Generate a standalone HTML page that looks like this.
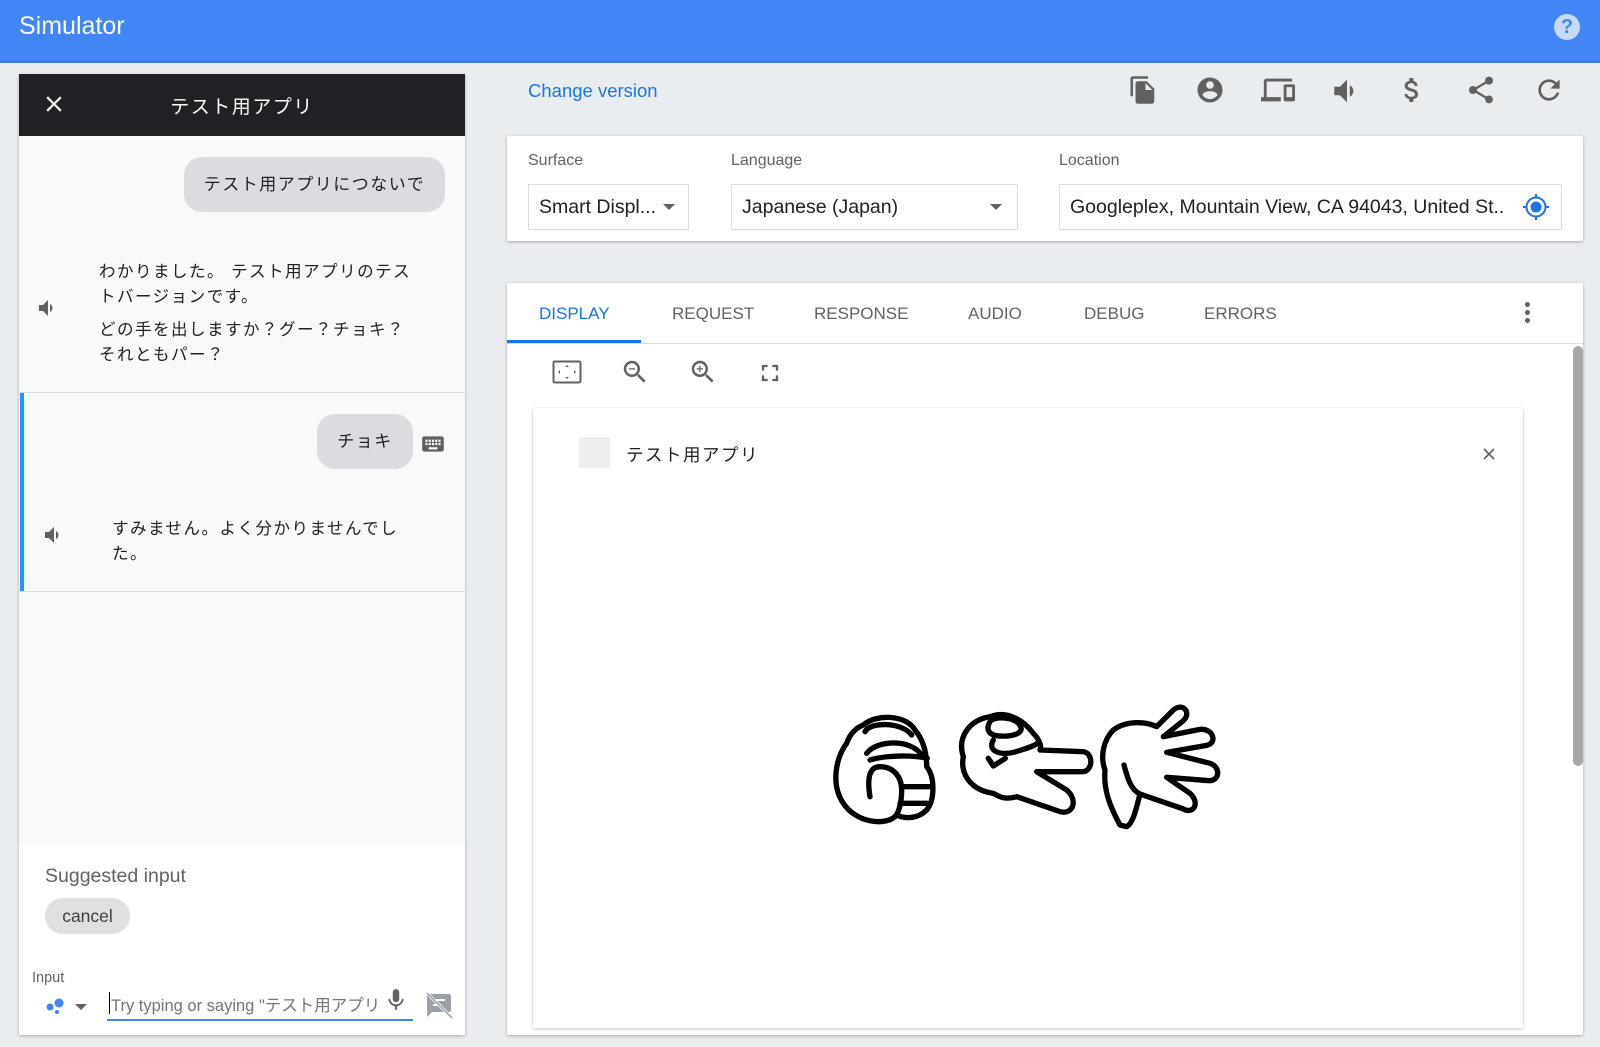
<!DOCTYPE html>
<html><head><meta charset="utf-8">
<style>
*{box-sizing:border-box;margin:0;padding:0}
body{width:1600px;height:1047px;background:#eaedf0;font-family:"Liberation Sans","Noto Sans CJK JP",sans-serif;position:relative;overflow:hidden;color:#202124}
.a{position:absolute}
.ic{position:absolute;fill:#616161}
.jp{font-family:"Liberation Sans","Noto Sans CJK JP",sans-serif;letter-spacing:1.5px}
.tab{position:absolute;top:304px;font-size:17px;color:#5f6368}
</style></head><body>
<div class="a" style="left:0;top:0;width:1600px;height:63px;background:#4285f4;border-bottom:2px solid #3b78e7"></div>
<div class="a" style="left:19px;top:12px;font-size:25px;color:#fff">Simulator</div>
<div class="a" style="left:1554px;top:14px;width:26px;height:26px;border-radius:50%;background:#c6dafc;color:#4285f4;font-weight:bold;font-size:20px;text-align:center;line-height:26px">?</div>

<!-- left panel -->
<div class="a" style="left:19px;top:74px;width:446px;height:961px;background:#fff;box-shadow:0 1px 3px rgba(0,0,0,.3)"></div>
<div class="a" style="left:19px;top:74px;width:446px;height:62px;background:#202124"></div>
<svg class="a" style="left:41px;top:91px" width="26" height="26" viewBox="0 0 24 24"><path fill="#fff" d="M19 6.41L17.59 5 12 10.59 6.41 5 5 6.41 10.59 12 5 17.59 6.41 19 12 13.41 17.59 19 19 17.59 13.41 12z"/></svg>
<div class="a jp" style="left:19px;width:446px;top:92px;text-align:center;color:#fff;font-size:19px">テスト用アプリ</div>
<div class="a" style="left:19px;top:136px;width:446px;height:709px;background:#f8f9fa"></div>
<div class="a jp" style="left:184px;top:157px;width:261px;height:55px;border-radius:18px;background:#dadce0;font-size:17px;line-height:55px;text-align:center">テスト用アプリにつないで</div>
<svg class="ic" style="left:36px;top:296px" width="24" height="24" viewBox="0 0 24 24"><path d="M3 9v6h4l5 5V4L7 9H3zm13.5 3c0-1.77-1.02-3.29-2.5-4.03v8.05c1.48-.73 2.5-2.25 2.5-4.02z"/></svg>
<div class="a jp" style="left:99px;top:260px;width:318px;font-size:16.5px;line-height:24.5px">わかりました。 テスト用アプリのテストバージョンです。<div style="height:9px"></div>どの手を出しますか？グー？チョキ？それともパー？</div>
<div class="a" style="left:19px;top:392px;width:446px;height:1px;background:#dadce0"></div>
<div class="a" style="left:20px;top:393px;width:4px;height:198px;background:#2196f3"></div>
<div class="a jp" style="left:317px;top:414px;width:96px;height:55px;border-radius:18px;background:#dadce0;font-size:17px;line-height:55px;text-align:center">チョキ</div>
<svg class="ic" style="left:420px;top:431px" width="26" height="26" viewBox="0 0 24 24"><path d="M20 5H4c-1.1 0-1.99.9-1.99 2L2 17c0 1.1.9 2 2 2h16c1.1 0 2-.9 2-2V7c0-1.1-.9-2-2-2zm-9 3h2v2h-2V8zm0 3h2v2h-2v-2zM8 8h2v2H8V8zm0 3h2v2H8v-2zm-1 2H5v-2h2v2zm0-3H5V8h2v2zm9 7H8v-2h8v2zm0-4h-2v-2h2v2zm0-3h-2V8h2v2zm3 3h-2v-2h2v2zm0-3h-2V8h2v2z"/></svg>
<svg class="ic" style="left:42px;top:523px" width="24" height="24" viewBox="0 0 24 24"><path d="M3 9v6h4l5 5V4L7 9H3zm13.5 3c0-1.77-1.02-3.29-2.5-4.03v8.05c1.48-.73 2.5-2.25 2.5-4.02z"/></svg>
<div class="a jp" style="left:112px;top:517px;width:300px;font-size:16.5px;line-height:24.5px">すみません。よく分かりませんでした。</div>
<div class="a" style="left:19px;top:591px;width:446px;height:1px;background:#dadce0"></div>
<div class="a" style="left:45px;top:865px;font-size:19.5px;color:#5f6368">Suggested input</div>
<div class="a" style="left:45px;top:898px;width:85px;height:36px;border-radius:18px;background:#e0e0e0;font-size:17.5px;line-height:36px;text-align:center;color:#3c4043">cancel</div>
<div class="a" style="left:32px;top:970px;font-size:14.5px;color:#5f6368">Input</div>
<svg class="a" style="left:46px;top:997px" width="20" height="20" viewBox="0 0 20 20"><circle cx="13" cy="6" r="4.5" fill="#4285f4"/><circle cx="4" cy="10" r="3.5" fill="#4285f4"/><circle cx="11" cy="15" r="2" fill="#4285f4"/></svg>
<div class="a" style="left:75px;top:1004px;border-left:6px solid transparent;border-right:6px solid transparent;border-top:6px solid #616161"></div>
<div class="a" style="left:107px;top:991px;width:306px;height:30px;border-bottom:2px solid #4285f4"></div>
<div class="a" style="left:109px;top:992px;width:1px;height:22px;background:#000"></div>
<div class="a jp" style="left:111px;top:992px;font-size:16.5px;color:#757575;letter-spacing:0;white-space:nowrap;width:270px;overflow:hidden">Try typing or saying "テスト用アプリ</div>
<svg class="ic" style="left:383px;top:986px" width="26" height="28" viewBox="0 0 24 24"><path d="M12 14c1.66 0 2.99-1.34 2.99-3L15 5c0-1.66-1.34-3-3-3S9 3.34 9 5v6c0 1.66 1.34 3 3 3zm5.3-3c0 3-2.54 5.1-5.3 5.1S6.7 14 6.7 11H5c0 3.41 2.72 6.23 6 6.72V21h2v-3.28c3.28-.48 6-3.3 6-6.72h-1.7z"/></svg>
<svg class="a" style="left:425px;top:991px" width="28" height="28" viewBox="0 0 28 28"><rect x="2" y="3" width="24" height="18" rx="2" fill="#9aa0a6"/><path d="M2 21v5l5-5z" fill="#9aa0a6"/><rect x="8" y="8" width="12" height="2" fill="#fff"/><rect x="8" y="13" width="8" height="2" fill="#fff"/><path d="M2 2L27 27" stroke="#fff" stroke-width="3"/><path d="M2 2L27 27" stroke="#9aa0a6" stroke-width="1.5"/></svg>

<!-- right top -->
<div class="a" style="left:528px;top:80px;font-size:18.5px;color:#1a73e8">Change version</div>
<svg class="ic" style="left:1128px;top:75px" width="30" height="30" viewBox="0 0 24 24"><path d="M16 1H4c-1.1 0-2 .9-2 2v14h2V3h12V1zm-1 4l6 6v10c0 1.1-.9 2-2 2H7.99C6.89 23 6 22.1 6 21l.01-14c0-1.1.89-2 1.99-2h7zm-1 7h5.5L14 6.5V12z"/></svg>
<svg class="ic" style="left:1195px;top:75px" width="30" height="30" viewBox="0 0 24 24"><path d="M12 2C6.48 2 2 6.48 2 12s4.48 10 10 10 10-4.48 10-10S17.52 2 12 2zm0 3c1.66 0 3 1.34 3 3s-1.34 3-3 3-3-1.34-3-3 1.34-3 3-3zm0 14.2c-2.5 0-4.71-1.28-6-3.22.03-1.99 4-3.08 6-3.08 1.99 0 5.97 1.09 6 3.08-1.29 1.94-3.5 3.22-6 3.22z"/></svg>
<svg class="ic" style="left:1261px;top:73px" width="34" height="34" viewBox="0 0 24 24"><path d="M4 6h18V4H4c-1.1 0-2 .9-2 2v11H0v3h14v-3H4V6zm19 2h-6c-.55 0-1 .45-1 1v10c0 .55.45 1 1 1h6c.55 0 1-.45 1-1V9c0-.55-.45-1-1-1zm-1 9h-4v-7h4v7z"/></svg>
<svg class="ic" style="left:1330px;top:74px" width="34" height="34" viewBox="0 0 24 24"><path d="M3 9v6h4l5 5V4L7 9H3zm13.5 3c0-1.77-1.02-3.29-2.5-4.03v8.05c1.48-.73 2.5-2.25 2.5-4.02z"/></svg>
<svg class="ic" style="left:1396px;top:73px" width="32" height="34" viewBox="0 0 24 24"><path d="M11.8 10.9c-2.27-.59-3-1.2-3-2.150 0-1.09 1.01-1.85 2.7-1.85 1.78 0 2.44.85 2.5 2.1h2.21c-.07-1.72-1.12-3.3-3.21-3.81V3h-3v2.16c-1.940.42-3.5 1.68-3.5 3.61 0 2.31 1.91 3.46 4.7 4.13 2.5.6 3 1.48 3 2.41 0 .69-.49 1.79-2.7 1.79-2.060 0-2.87-.92-2.98-2.1h-2.2c.12 2.19 1.76 3.42 3.68 3.83V21h3v-2.15c1.95-.37 3.5-1.5 3.5-3.55 0-2.84-2.43-3.81-4.7-4.4z"/></svg>
<svg class="ic" style="left:1465px;top:74px" width="32" height="32" viewBox="0 0 24 24"><path d="M18 16.08c-.76 0-1.44.3-1.96.77L8.91 12.7c.05-.23.09-.46.09-.7s-.04-.47-.09-.7l7.05-4.11c.54.5 1.25.81 2.04.81 1.66 0 3-1.34 3-3s-1.34-3-3-3-3 1.34-3 3c0 .24.04.47.09.7L8.04 9.81C7.5 9.31 6.79 9 6 9c-1.66 0-3 1.34-3 3s1.34 3 3 3c.79 0 1.5-.31 2.04-.81l7.12 4.16c-.05.21-.08.43-.08.65 0 1.61 1.31 2.92 2.92 2.920s2.92-1.31 2.92-2.92-1.31-2.92-2.92-2.92z"/></svg>
<svg class="ic" style="left:1533px;top:74px" width="32" height="32" viewBox="0 0 24 24"><path d="M17.65 6.35C16.2 4.9 14.21 4 12 4c-4.42 0-7.99 3.58-7.99 8s3.57 8 7.99 8c3.73 0 6.84-2.55 7.73-6h-2.08c-.82 2.33-3.04 4-5.65 4-3.31 0-6-2.69-6-6s2.69-6 6-6c1.66 0 3.14.69 4.22 1.78L13 11h7V4l-2.35 2.35z"/></svg>

<!-- settings card -->
<div class="a" style="left:507px;top:136px;width:1076px;height:105px;background:#fff;border-radius:2px;box-shadow:0 1px 3px rgba(0,0,0,.3)"></div>
<div class="a" style="left:528px;top:152px;font-size:16px;color:#5f6368">Surface</div>
<div class="a" style="left:731px;top:152px;font-size:16px;color:#5f6368">Language</div>
<div class="a" style="left:1059px;top:152px;font-size:16px;color:#5f6368">Location</div>
<div class="a" style="left:528px;top:184px;width:161px;height:46px;border:1px solid #dadce0;font-size:19.5px;line-height:44px;padding-left:10px">Smart Displ...</div>
<div class="a" style="left:663px;top:204px;border-left:6px solid transparent;border-right:6px solid transparent;border-top:6px solid #616161"></div>
<div class="a" style="left:731px;top:184px;width:287px;height:46px;border:1px solid #dadce0;font-size:19.5px;line-height:44px;padding-left:10px">Japanese (Japan)</div>
<div class="a" style="left:990px;top:204px;border-left:6px solid transparent;border-right:6px solid transparent;border-top:6px solid #616161"></div>
<div class="a" style="left:1059px;top:184px;width:503px;height:46px;border:1px solid #dadce0;font-size:19.5px;line-height:44px;padding-left:10px;white-space:nowrap">Googleplex, Mountain View, CA 94043, United St..</div>
<svg class="a" style="left:1522px;top:193px" width="28" height="28" viewBox="0 0 28 28"><circle cx="14" cy="14" r="9.5" fill="none" stroke="#1a73e8" stroke-width="2"/><circle cx="14" cy="14" r="5.5" fill="#1a73e8"/><path d="M14 1v4M14 23v4M1 14h4M23 14h4" stroke="#1a73e8" stroke-width="2"/></svg>

<!-- display card -->
<div class="a" style="left:507px;top:283px;width:1076px;height:752px;background:#fff;border-radius:2px;box-shadow:0 1px 3px rgba(0,0,0,.3)"></div>
<div class="a" style="left:507px;top:343px;width:1076px;height:1px;background:#dadce0"></div>
<div class="a" style="left:507px;top:340px;width:134px;height:3px;background:#1a73e8"></div>
<div class="tab" style="left:539px;color:#1a73e8">DISPLAY</div>
<div class="tab" style="left:672px">REQUEST</div>
<div class="tab" style="left:814px">RESPONSE</div>
<div class="tab" style="left:968px">AUDIO</div>
<div class="tab" style="left:1084px">DEBUG</div>
<div class="tab" style="left:1204px">ERRORS</div>
<div class="a" style="left:1525px;top:302px;width:5px;height:5px;border-radius:50%;background:#616161;box-shadow:0 8px 0 #616161,0 16px 0 #616161"></div>
<div class="a" style="left:1573px;top:346px;width:10px;height:420px;border-radius:5px;background:#a8a8a8"></div>
<svg class="ic" style="left:552px;top:360px" width="30" height="24" viewBox="0 0 30 24"><rect x="1.5" y="1.5" width="27" height="21" rx="1.5" fill="none" stroke="#616161" stroke-width="2"/><path d="M15 5l-2 2h4zM15 19l-2-2h4zM6 12l2-2v4zM24 12l-2-2v4z"/></svg>
<svg class="ic" style="left:620px;top:357px" width="30" height="30" viewBox="0 0 24 24"><path d="M15.5 14h-.79l-.28-.27C15.41 12.59 16 11.11 16 9.5 16 5.91 13.09 3 9.5 3S3 5.91 3 9.5 5.91 16 9.5 16c1.61 0 3.09-.59 4.23-1.57l.27.28v.79l5 4.99L20.49 19l-4.99-5zm-6 0C7.01 14 5 11.99 5 9.5S7.01 5 9.5 5 14 7.01 14 9.5 11.99 14 9.5 14zM7 9h5v1H7z"/></svg>
<svg class="ic" style="left:688px;top:357px" width="30" height="30" viewBox="0 0 24 24"><path d="M15.5 14h-.79l-.28-.27C15.41 12.59 16 11.11 16 9.5 16 5.91 13.09 3 9.5 3S3 5.910 3 9.5 5.91 16 9.5 16c1.61 0 3.09-.59 4.23-1.57l.27.28v.79l5 4.99L20.49 19l-4.99-5zm-6 0C7.01 14 5 11.99 5 9.5S7.01 5 9.5 5 14 7.01 14 9.5 11.99 14 9.5 14zM12 10h-2v2H9v-2H7V9h2V7h1v2h2z"/></svg>
<svg class="ic" style="left:756px;top:359px" width="28" height="28" viewBox="0 0 24 24"><path d="M7 14H5v5h5v-2H7v-3zm-2-4h2V7h3V5H5v5zm12 7h-3v2h5v-5h-2v3zM14 5v2h3v3h2V5h-5z"/></svg>
<div class="a" style="left:533px;top:408px;width:990px;height:620px;background:#fff;box-shadow:0 1px 3px rgba(0,0,0,.25)"></div>
<div class="a" style="left:579px;top:437px;width:31px;height:31px;background:#eeeeee"></div>
<div class="a jp" style="left:626px;top:442px;font-size:17.5px">テスト用アプリ</div>
<svg class="a" style="left:1482px;top:447px" width="14" height="14" viewBox="0 0 14 14"><path d="M2 2L12 12M12 2L2 12" stroke="#616161" stroke-width="1.6"/></svg>

<svg class="a" style="left:820px;top:690px" width="420" height="150" viewBox="0 0 1260 450" fill="#fff" stroke="#000" stroke-width="16" stroke-linecap="round" stroke-linejoin="round">
<path d="M130,105 C170,70 260,75 285,120 C310,150 320,190 320,230 C345,260 345,330 320,360 C290,390 250,385 230,375 C200,410 110,400 70,340 C30,280 50,200 80,160 C90,130 110,112 130,105 Z"/>
<path fill="none" d="M135,125 C150,95 245,95 275,135 M140,190 C170,150 270,145 305,195 M150,210 C200,195 280,195 322,205 M150,320 C140,260 150,230 180,230 C220,230 245,260 245,300 C245,340 235,370 225,380 M245,290 L332,290 M240,340 L322,340"/>
<path d="M430,200 C410,140 450,90 510,80 C560,60 610,90 640,130 C660,150 665,170 660,180 L790,185 C820,190 820,240 790,245 L650,245 L740,300 C775,330 760,375 720,365 L590,320 C550,330 540,320 520,310 C450,300 420,250 430,200 Z"/>
<path d="M510,95 C520,78 590,78 602,110 C612,132 570,142 530,137 C500,132 500,112 510,95 Z"/>
<path fill="none" d="M520,150 C500,185 545,198 585,186 C615,176 640,170 652,160 M505,205 L520,228 L556,205"/>
<path d="M900,405 C870,350 850,300 855,240 C840,200 850,150 880,120 C920,90 980,95 1010,110 L1060,60 C1090,35 1115,70 1090,92 L1030,140 L1140,118 C1182,115 1192,160 1160,166 L1040,187 L1170,220 C1202,230 1200,272 1168,272 L1040,262 L1110,310 C1142,340 1120,375 1088,356 L960,312 C950,350 940,400 920,410 Z"/>
<path fill="none" d="M912,225 C922,262 932,300 960,312"/>
</svg>
</body></html>
